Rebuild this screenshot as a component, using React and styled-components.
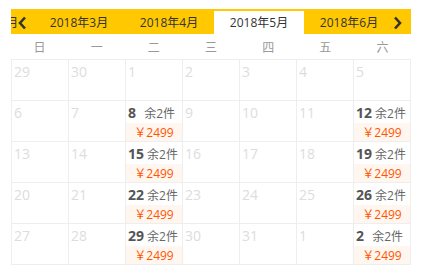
import React from "react";
import styled, { createGlobalStyle } from "styled-components";

const GlobalStyle = createGlobalStyle`
  body {
    margin: 0;
    background: #fff;
    font-family: "Open Sans", "Noto Sans CJK SC", sans-serif;
  }
`;

const TABS = ["2018年2月", "2018年3月", "2018年4月", "2018年5月", "2018年6月"];
const ACTIVE = 3;
const WEEKDAYS = ["日", "一", "二", "三", "四", "五", "六"];
const AVAILABLE = [8, 12, 15, 19, 22, 26, 29];

const buildDays = () => {
  const days = [
    { n: 29, out: true },
    { n: 30, out: true },
  ];
  for (let i = 1; i <= 31; i++) {
    days.push({ n: i, stock: AVAILABLE.includes(i) });
  }
  days.push({ n: 1, out: true });
  days.push({ n: 2, out: true, stock: true });
  return days;
};

const Chevron = ({ dir }) => (
  <svg width="9" height="14" viewBox="0 0 9 14">
    <polyline
      points={dir === "left" ? "7,1.5 2,7 7,12.5" : "2,1.5 7,7 2,12.5"}
      fill="none"
      stroke="#333"
      strokeWidth="2.6"
    />
  </svg>
);

const App = () => {
  const days = buildDays();
  return (
    <>
      <GlobalStyle />
      <Page>
        <MonthBar>
          <TabStrip>
            {TABS.map((t, i) => (
              <Tab key={t} $active={i === ACTIVE}>
                {t}
              </Tab>
            ))}
          </TabStrip>
          <Arrow $side="left">
            <Chevron dir="left" />
          </Arrow>
          <Arrow $side="right">
            <Chevron dir="right" />
          </Arrow>
        </MonthBar>
        <WeekRow>
          {WEEKDAYS.map((w) => (
            <span key={w}>{w}</span>
          ))}
        </WeekRow>
        <Grid>
          {days.map((d, i) =>
            d.stock ? (
              <Cell key={i}>
                <TopLine>
                  <DayNum $strong>{d.n}</DayNum>
                  <Stock>余2件</Stock>
                </TopLine>
                <Price>￥2499</Price>
              </Cell>
            ) : (
              <Cell key={i}>
                <TopLine>
                  <DayNum>{d.n}</DayNum>
                </TopLine>
              </Cell>
            )
          )}
        </Grid>
      </Page>
    </>
  );
};

const Page = styled.div`
  width: 400px;
  padding: 9px 11px;
`;

const MonthBar = styled.div`
  position: relative;
  height: 25px;
  background: #ffc800;
  overflow: hidden;
`;

const TabStrip = styled.div`
  display: flex;
  margin-left: -67px;
  padding-top: 2px;
`;

const Tab = styled.div`
  flex: 0 0 90px;
  height: 24px;
  line-height: 24px;
  text-align: center;
  font-size: 12px;
  color: #333;
  background: ${(p) => (p.$active ? "#fff" : "transparent")};
`;

const Arrow = styled.div`
  position: absolute;
  top: 0;
  ${(p) => (p.$side === "left" ? "left: 6px;" : "right: 9px;")}
  height: 25px;
  width: 10px;
  display: flex;
  align-items: center;
  justify-content: center;
  padding-top: 2px;
  box-sizing: border-box;
`;

const WeekRow = styled.div`
  display: grid;
  grid-template-columns: repeat(7, 1fr);
  height: 25px;
  align-items: center;
  text-align: center;
  font-size: 12px;
  color: #999;
`;

const Grid = styled.div`
  display: grid;
  grid-template-columns: repeat(7, 1fr);
  grid-auto-rows: 41px;
  border-top: 1px solid #eee;
  border-left: 1px solid #eee;
`;

const Cell = styled.div`
  display: flex;
  flex-direction: column;
  border-right: 1px solid #eee;
  border-bottom: 1px solid #eee;
  overflow: hidden;
`;

const TopLine = styled.div`
  display: flex;
  align-items: baseline;
  justify-content: space-between;
  gap: 3px;
  height: 23px;
  padding: 3px 7px 0 2px;
  box-sizing: border-box;
`;

const DayNum = styled.span`
  font-size: 14px;
  line-height: 18px;
  font-weight: ${(p) => (p.$strong ? 700 : 400)};
  color: ${(p) => (p.$strong ? "#555" : "#ddd")};
`;

const Stock = styled.span`
  font-size: 12px;
  color: #666;
  white-space: nowrap;
`;

const Price = styled.div`
  flex: 1;
  background: #fff6f0;
  color: #ff5500;
  font-size: 12px;
  display: flex;
  align-items: center;
  justify-content: center;
`;

export default App;
